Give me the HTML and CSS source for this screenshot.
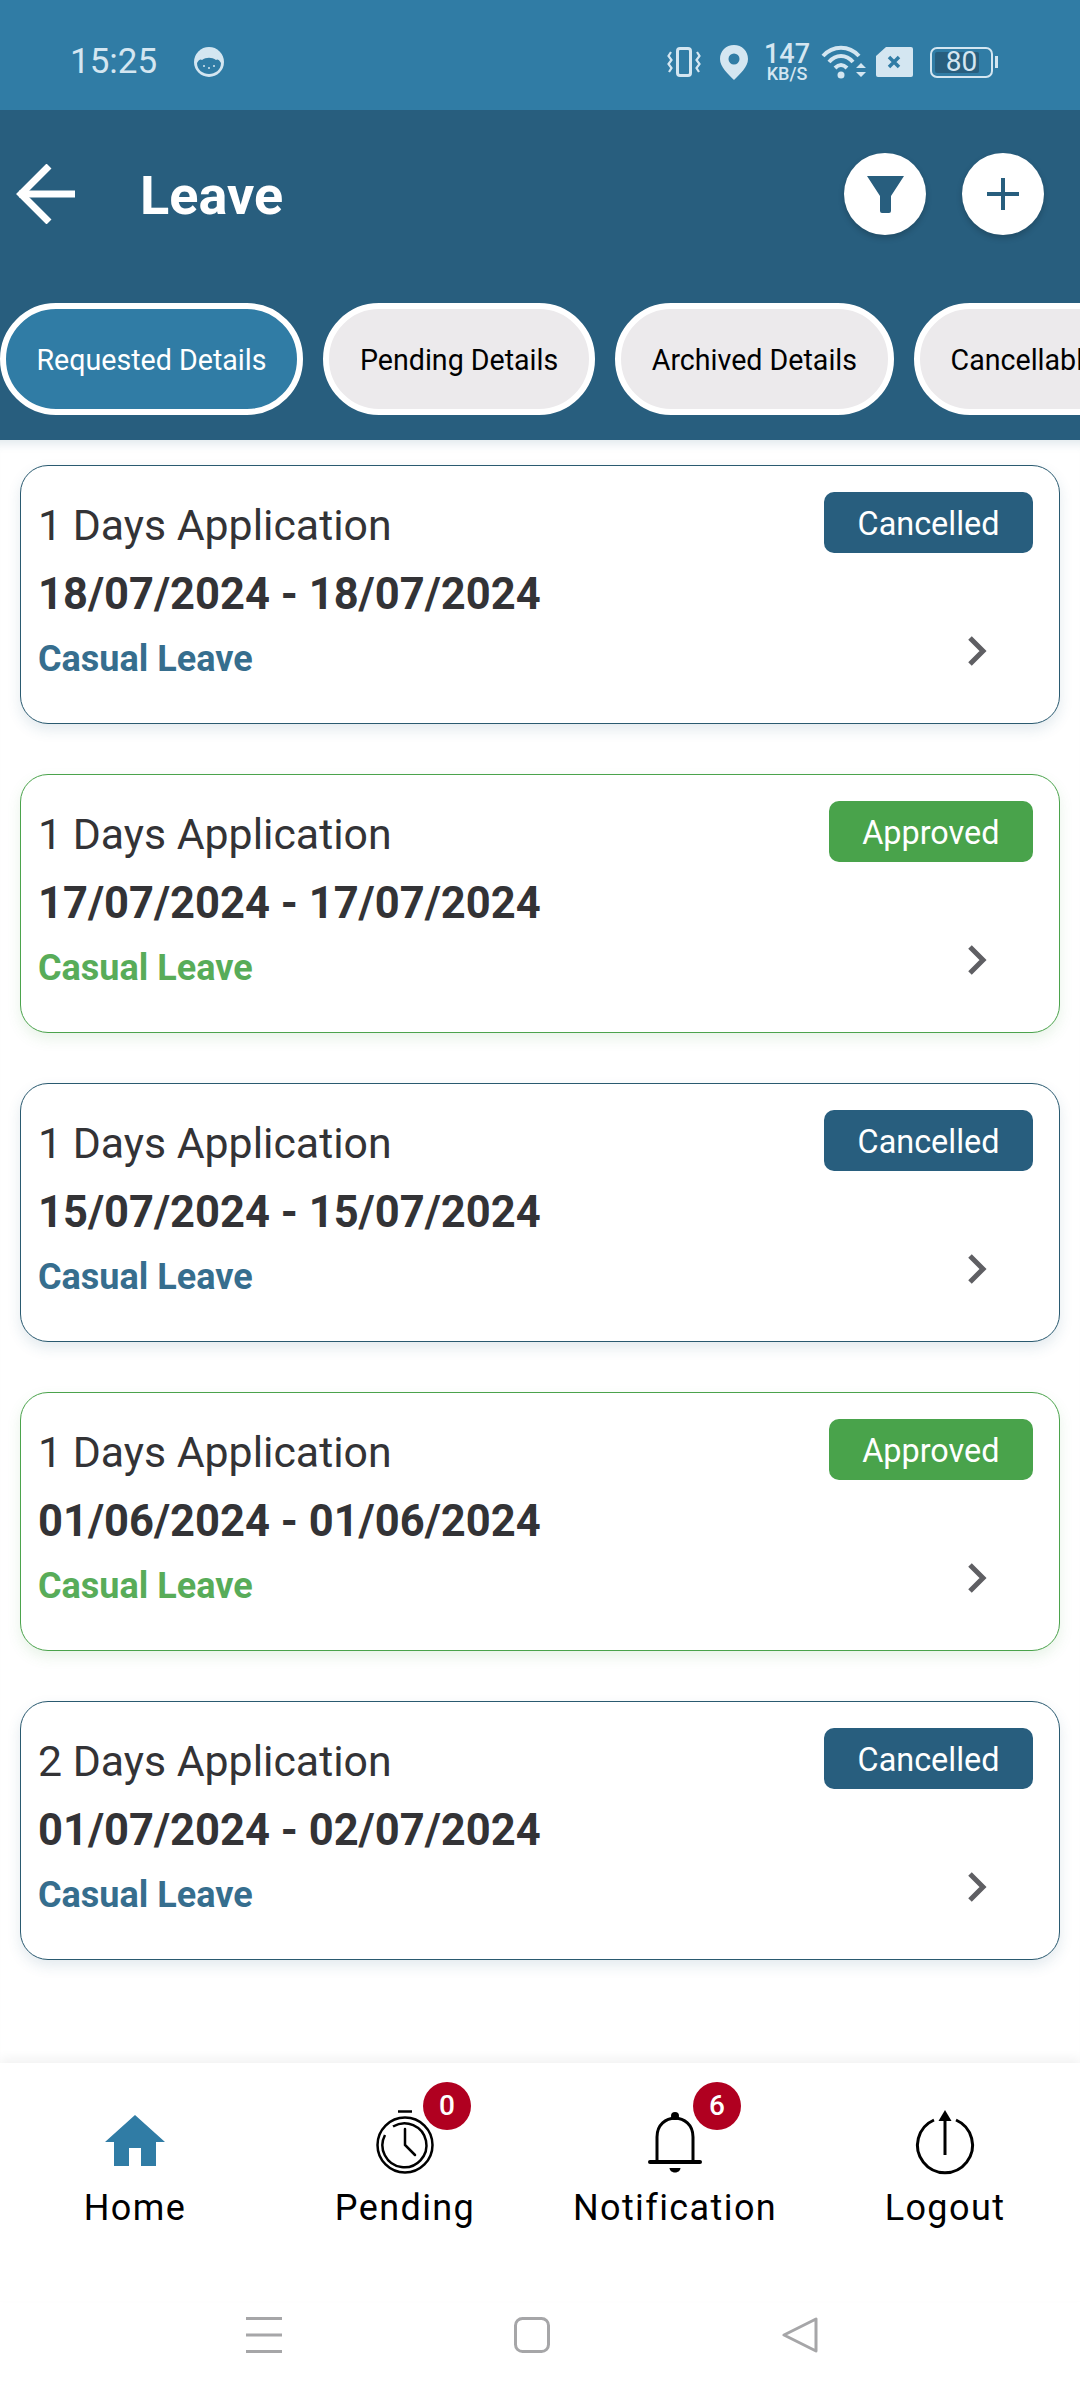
FILE: index.html
```html
<!DOCTYPE html>
<html lang="en">
<head>
  <meta charset="UTF-8">
  <title>Leave</title>
  <meta name="viewport" content="width=device-width, initial-scale=1.0" />
  <link rel="stylesheet" href="styles.css">
</head>
<body>

<div class="screen">

  <div class="status-bar">
    <span class="time">15:25</span>
    <svg class="face" width="30" height="30" viewBox="0 0 30 30">
      <circle cx="15" cy="15" r="15" fill="#d4e6f1"/>
      <path d="M3 16 C5 12 7 12 8 13 C12 10 18 10 22 13 C23 12 25 12 27 16 C27 23 21 27 15 27 C9 27 3 23 3 16Z" fill="#307ca5"/>
      <circle cx="10" cy="19" r="1" fill="#d4e6f1"/>
      <circle cx="15" cy="21" r="1" fill="#d4e6f1"/>
      <circle cx="20" cy="19" r="1" fill="#d4e6f1"/>
    </svg>
    <div class="status-right">
      <svg width="34" height="30" viewBox="0 0 34 30" fill="none" stroke="#d4e6f1">
        <rect x="10.5" y="1.5" width="13" height="27" rx="2.5" stroke-width="3"/>
        <path d="M4 5 L1.5 9 L4.5 13 L1.5 17 L4.5 21 L2 25 M30 5 L32.5 9 L29.5 13 L32.5 17 L29.5 21 L32 25" stroke-width="2.2"/>
      </svg>
      <svg class="pin" width="28" height="35" viewBox="0 0 28 35">
        <path fill-rule="evenodd" fill="#d4e6f1" d="M14 0 C22 0 28 6 28 14 C28 22 20 29 14 35 C8 29 0 22 0 14 C0 6 6 0 14 0Z M14 8.5 A5.5 5.5 0 1 0 14 19.5 A5.5 5.5 0 1 0 14 8.5Z"/>
      </svg>
      <div class="speed"><span class="speed-num">147</span><span class="speed-unit">KB/S</span></div>
      <svg class="wifi" width="46" height="36" viewBox="0 0 46 36" fill="none" stroke="#d4e6f1" stroke-width="4">
        <path d="M2 12 C12 1 28 1 38 12"/>
        <path d="M8 18 C15 10 25 10 32 18"/>
        <path d="M14 24 C18 20 22 20 26 24"/>
        <circle cx="20" cy="31" r="3.5" fill="#d4e6f1" stroke="none"/>
        <path d="M35 24 L40 19 L45 24Z M35 28 L45 28 L40 33Z" fill="#d4e6f1" stroke="none"/>
      </svg>
      <svg class="sim" width="37" height="30" viewBox="0 0 37 30">
        <path fill="#d4e6f1" d="M10 0 H35 Q37 0 37 2 V28 Q37 30 35 30 H2 Q0 30 0 28 V9Z"/>
        <path d="M13 10 L23 20 M23 10 L13 20" stroke="#307ca5" stroke-width="3.5"/>
      </svg>
      <div class="battery">
        <div class="battery-body"><span class="battery-fill"></span><span class="battery-num">80</span></div>
        <span class="battery-tip"></span>
      </div>
    </div>
  </div>

  <div class="header">
    <div class="title-row">
      <svg class="back" width="62" height="60" viewBox="0 0 62 60" fill="none" stroke="#fff" stroke-width="7">
        <path d="M4 30 H60"/>
        <path d="M34 2 L6 30 L34 58"/>
      </svg>
      <h1>Leave</h1>
      <div class="round-btn">
        <svg width="37" height="37" viewBox="0 0 37 37">
          <path fill="#285e7e" d="M0 0 H37 L24 20 V35 Q24 37 22 37 H15 Q13 37 13 35 V20Z"/>
        </svg>
      </div>
      <div class="round-btn">
        <svg width="32" height="32" viewBox="0 0 32 32">
          <path d="M16 0 V32 M0 16 H32" stroke="#285e7e" stroke-width="4"/>
        </svg>
      </div>
    </div>
    <div class="chips">
      <div class="chip active">Requested Details</div>
      <div class="chip">Pending Details</div>
      <div class="chip">Archived Details</div>
      <div class="chip">Cancellable Details</div>
    </div>
  </div>

  <div class="list">
    <div class="card">
      <div class="card-text">
        <div class="days">1 Days Application</div>
        <div class="dates">18/07/2024 - 18/07/2024</div>
        <div class="type">Casual Leave</div>
      </div>
      <div class="card-side">
        <span class="badge">Cancelled</span>
        <svg class="chevron" width="20" height="30" viewBox="0 0 20 30" fill="none" stroke="#5f5f63" stroke-width="5"><path d="M3 2 L16 15 L3 28"/></svg>
      </div>
    </div>
    <div class="card green">
      <div class="card-text">
        <div class="days">1 Days Application</div>
        <div class="dates">17/07/2024 - 17/07/2024</div>
        <div class="type">Casual Leave</div>
      </div>
      <div class="card-side">
        <span class="badge">Approved</span>
        <svg class="chevron" width="20" height="30" viewBox="0 0 20 30" fill="none" stroke="#5f5f63" stroke-width="5"><path d="M3 2 L16 15 L3 28"/></svg>
      </div>
    </div>
    <div class="card">
      <div class="card-text">
        <div class="days">1 Days Application</div>
        <div class="dates">15/07/2024 - 15/07/2024</div>
        <div class="type">Casual Leave</div>
      </div>
      <div class="card-side">
        <span class="badge">Cancelled</span>
        <svg class="chevron" width="20" height="30" viewBox="0 0 20 30" fill="none" stroke="#5f5f63" stroke-width="5"><path d="M3 2 L16 15 L3 28"/></svg>
      </div>
    </div>
    <div class="card green">
      <div class="card-text">
        <div class="days">1 Days Application</div>
        <div class="dates">01/06/2024 - 01/06/2024</div>
        <div class="type">Casual Leave</div>
      </div>
      <div class="card-side">
        <span class="badge">Approved</span>
        <svg class="chevron" width="20" height="30" viewBox="0 0 20 30" fill="none" stroke="#5f5f63" stroke-width="5"><path d="M3 2 L16 15 L3 28"/></svg>
      </div>
    </div>
    <div class="card">
      <div class="card-text">
        <div class="days">2 Days Application</div>
        <div class="dates">01/07/2024 - 02/07/2024</div>
        <div class="type">Casual Leave</div>
      </div>
      <div class="card-side">
        <span class="badge">Cancelled</span>
        <svg class="chevron" width="20" height="30" viewBox="0 0 20 30" fill="none" stroke="#5f5f63" stroke-width="5"><path d="M3 2 L16 15 L3 28"/></svg>
      </div>
    </div>
  </div>

  <div class="bottom-nav">
    <div class="nav-item">
      <div class="nav-icon">
        <svg width="68" height="68" viewBox="0 0 68 68">
          <path fill="#307ca5" fill-rule="evenodd" d="M34 7 L64 34 H55 V58 H40 V40 H28 V58 H13 V34 H4Z"/>
        </svg>
      </div>
      <span class="nav-label">Home</span>
    </div>
    <div class="nav-item">
      <div class="nav-icon">
        <svg width="68" height="68" viewBox="0 0 68 68" fill="none" stroke="#000">
          <path d="M27 3.5 H41" stroke-width="2.5"/>
          <circle cx="34" cy="37" r="27.5" stroke-width="2.5"/>
          <path d="M14 27 A22 22 0 1 0 22 18.5" stroke-width="2.5"/>
          <path d="M34 21 V37 L44 47" stroke-width="2.5" stroke-linecap="round"/>
        </svg>
        <span class="count">0</span>
      </div>
      <span class="nav-label">Pending</span>
    </div>
    <div class="nav-item">
      <div class="nav-icon">
        <svg width="68" height="68" viewBox="0 0 68 68" fill="none" stroke="#000" stroke-width="3">
          <circle cx="34" cy="8" r="4" fill="#000" stroke="none"/>
          <path d="M16 53 V29 C16 4 52 4 52 29 V53"/>
          <path d="M9 54 H59" stroke-width="4" stroke-linecap="round"/>
          <path d="M28.5 60 H39.5 C39 66 29 66 28.5 60Z" fill="#000" stroke="none"/>
        </svg>
        <span class="count">6</span>
      </div>
      <span class="nav-label">Notification</span>
    </div>
    <div class="nav-item">
      <div class="nav-icon">
        <svg width="68" height="68" viewBox="0 0 68 68" fill="none" stroke="#000" stroke-width="3">
          <path d="M23 12 A27.5 27.5 0 1 0 45 12"/>
          <path d="M34 11 V47"/>
          <path d="M27.5 13 L34 2 L40.5 13Z" fill="#000" stroke="none"/>
        </svg>
      </div>
      <span class="nav-label">Logout</span>
    </div>
  </div>

  <div class="system-nav">
    <svg width="36" height="36" viewBox="0 0 36 36" stroke="#a6a6a8" stroke-width="3">
      <path d="M0 1.5 H36 M0 18 H36 M0 34.5 H36"/>
    </svg>
    <svg width="36" height="36" viewBox="0 0 36 36" fill="none" stroke="#a6a6a8" stroke-width="3">
      <rect x="1.5" y="1.5" width="33" height="33" rx="7"/>
    </svg>
    <svg width="36" height="36" viewBox="0 0 36 36" fill="none" stroke="#a6a6a8" stroke-width="3" stroke-linejoin="round">
      <path d="M2 18 L34 2 V34Z"/>
    </svg>
  </div>

</div>

</body>
</html>
```

FILE: styles.css
```css
* {
  box-sizing: border-box;
  font-family: 'Roboto', sans-serif;
}

body {
  margin: 0;
  padding: 0;
  background-color: #ffffff;
}

.screen {
  width: 1080px;
  height: 2400px;
  display: flex;
  flex-direction: column;
  overflow: hidden;
}

.status-bar {
  height: 110px;
  background-color: #307ca5;
  color: #d4e6f1;
  display: flex;
  align-items: center;
  padding: 14px 82px 0 70px;
}

.time {
  font-size: 35px;
  line-height: 40px;
}

.face {
  margin-left: 37px;
}

.status-right {
  margin-left: auto;
  display: flex;
  align-items: center;
}

.pin {
  margin-left: 19px;
}

.speed {
  display: flex;
  flex-direction: column;
  align-items: center;
  margin-left: 18px;
  width: 42px;
  font-weight: 500;
}

.speed-num {
  font-size: 27px;
  line-height: 22px;
}

.speed-unit {
  font-size: 18px;
  line-height: 17px;
  white-space: nowrap;
}

.wifi {
  margin-left: 13px;
}

.sim {
  margin-left: 9px;
}

.battery {
  display: flex;
  align-items: center;
  margin-left: 17px;
}

.battery-body {
  position: relative;
  width: 63px;
  height: 31px;
  border: 2.5px solid #d4e6f1;
  border-radius: 7px;
  text-align: center;
  font-size: 28px;
  line-height: 26px;
}

.battery-fill {
  position: absolute;
  left: 3px;
  top: 3px;
  bottom: 3px;
  width: 44px;
  background-color: #285e7e;
  border-radius: 2px;
}

.battery-num {
  position: relative;
}

.battery-tip {
  width: 3px;
  height: 12px;
  margin-left: 2px;
  background-color: #d4e6f1;
}

.header {
  height: 330px;
  background-color: #285e7e;
  padding-top: 43px;
}

.title-row {
  display: flex;
  align-items: center;
  height: 82px;
  padding: 0 36px 0 15px;
}

.title-row h1 {
  margin: 3px auto 0 63px;
  font-size: 54px;
  font-weight: 700;
  color: #ffffff;
  line-height: 60px;
}

.round-btn {
  width: 82px;
  height: 82px;
  border-radius: 50%;
  background-color: #ffffff;
  margin-left: 36px;
  display: flex;
  align-items: center;
  justify-content: center;
  box-shadow: 0 3px 6px rgba(0,0,0,0.2);
}

.chips {
  display: flex;
  gap: 20.5px;
  margin-top: 68px;
}

.chip {
  flex-shrink: 0;
  height: 112px;
  padding: 0 30.5px;
  border: 6px solid #ffffff;
  border-radius: 56px;
  background-color: #eceaec;
  color: #000000;
  font-size: 28.6px;
  line-height: 103px;
  white-space: nowrap;
}

.chip.active {
  background-color: #307ca5;
  color: #ffffff;
}

.list {
  flex: 1;
  padding: 25px 20px 0 20px;
  background-color: #ffffff;
  box-shadow: inset 0 12px 10px -8px rgba(40,94,126,0.14);
}

.card {
  height: 259px;
  margin-bottom: 50px;
  border: 1px solid #2a5a70;
  border-radius: 28px;
  background-color: #ffffff;
  box-shadow: 0 6px 14px rgba(40,94,126,0.13);
  display: flex;
  justify-content: space-between;
  padding: 0 26px 0 17px;
}

.card.green {
  border-color: #4ba34c;
  box-shadow: 0 6px 14px rgba(75,163,76,0.13);
}

.card-text {
  padding-top: 29px;
}

.days {
  font-size: 42.8px;
  line-height: 60px;
  color: #333336;
}

.dates {
  font-size: 43.5px;
  font-weight: 700;
  line-height: 60px;
  margin-top: 10px;
  color: #333336;
}

.type {
  font-size: 36px;
  font-weight: 700;
  line-height: 50px;
  margin-top: 9px;
  color: #366e8e;
}

.card.green .type {
  color: #58ac59;
}

.card-side {
  display: flex;
  flex-direction: column;
  align-items: flex-end;
  padding-top: 26px;
}

.badge {
  height: 61px;
  padding: 0 33.5px;
  border-radius: 10px;
  background-color: #285e7e;
  color: #ffffff;
  font-size: 32.4px;
  line-height: 64px;
}

.card.green .badge {
  background-color: #49a34b;
}

.chevron {
  margin-top: 83px;
  margin-right: 46px;
}

.bottom-nav {
  height: 238px;
  display: flex;
  padding-top: 45px;
  background-color: #ffffff;
  box-shadow: 0 -5px 10px rgba(0,0,0,0.05);
  position: relative;
}

.nav-item {
  width: 270px;
  display: flex;
  flex-direction: column;
  align-items: center;
}

.nav-icon {
  position: relative;
  width: 68px;
  height: 68px;
}

.nav-icon svg {
  display: block;
}

.count {
  position: absolute;
  left: 52px;
  top: -26px;
  width: 48px;
  height: 48px;
  border-radius: 50%;
  background-color: #b00020;
  color: #ffffff;
  font-size: 28px;
  font-weight: 500;
  line-height: 48px;
  text-align: center;
}

.nav-label {
  margin-top: 8px;
  font-size: 36px;
  line-height: 48px;
  letter-spacing: 1.4px;
  color: #000000;
}

.system-nav {
  height: 99px;
  display: flex;
  align-items: flex-start;
  gap: 232px;
  padding: 16px 0 0 246px;
  background-color: #ffffff;
}
```
